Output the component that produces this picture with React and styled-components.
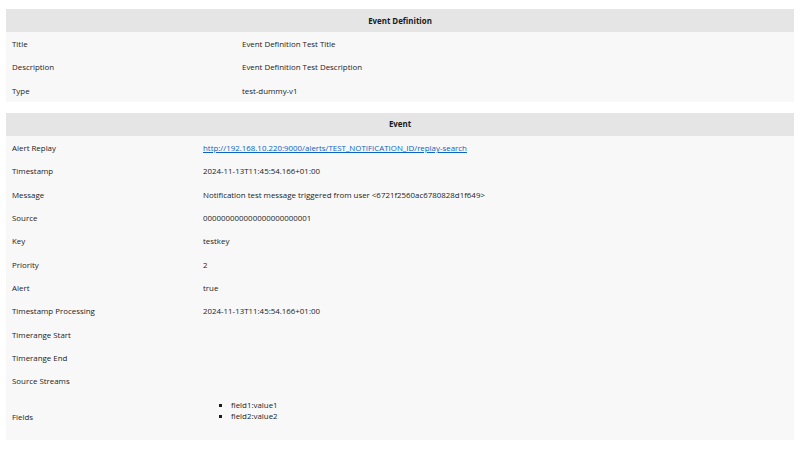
import React from "react";
import styled, { createGlobalStyle } from "styled-components";

const Global = createGlobalStyle`
  html, body { margin: 0; padding: 0; background: #ffffff; }
  body { font-family: "Open Sans", "Liberation Sans", Arial, sans-serif; }
`;

const Page = styled.div`
  padding: 9px 6px 0 6px;
  display: flex;
  flex-direction: column;
  gap: 11px;
`;

const Table = styled.table`
  width: 100%;
  table-layout: fixed;
  border-collapse: collapse;
  border-spacing: 0;
  background: #f8f8f8;
  font-size: 7.9px;
  color: #1c1c1c;
`;

const HeaderCell = styled.th`
  background: #e5e5e5;
  height: 23px;
  padding: 0 6px;
  font-weight: bold;
  text-align: center;
  vertical-align: middle;
  color: #1a1a1a;
`;

const Row = styled.tr`
  height: 23.33px;
`;

const LabelCell = styled.td`
  padding: 1px 6px 0 6px;
  vertical-align: middle;
  text-align: left;
`;

const ValueCell = styled.td`
  padding: 1px 6px 0 6px;
  vertical-align: middle;
  text-align: left;
`;

const Link = styled.a`
  color: #0b63c5;
  text-decoration: underline;
`;

const List = styled.ul`
  margin: 6px 0 18px 0;
  padding-left: 28px;
  list-style: square;
  line-height: 11px;
`;

const Section = ({ title, labelWidth, rows }) => (
  <Table>
    <colgroup>
      <col style={{ width: labelWidth }} />
      <col />
    </colgroup>
    <thead>
      <tr>
        <HeaderCell colSpan={2}>{title}</HeaderCell>
      </tr>
    </thead>
    <tbody>
      {rows.map(([label, value], i) => (
        <Row key={i}>
          <LabelCell>{label}</LabelCell>
          <ValueCell>{value}</ValueCell>
        </Row>
      ))}
    </tbody>
  </Table>
);

export default function App() {
  const defRows = [
    ["Title", "Event Definition Test Title"],
    ["Description", "Event Definition Test Description"],
    ["Type", "test-dummy-v1"],
  ];
  const url = "http://192.168.10.220:9000/alerts/TEST_NOTIFICATION_ID/replay-search";
  const eventRows = [
    ["Alert Replay", <Link href={url}>{url}</Link>],
    ["Timestamp", "2024-11-13T11:45:54.166+01:00"],
    ["Message", "Notification test message triggered from user <6721f2560ac6780828d1f649>"],
    ["Source", "000000000000000000000001"],
    ["Key", "testkey"],
    ["Priority", "2"],
    ["Alert", "true"],
    ["Timestamp Processing", "2024-11-13T11:45:54.166+01:00"],
    ["Timerange Start", ""],
    ["Timerange End", ""],
    ["Source Streams", ""],
    [
      "Fields",
      <List>
        <li>field1:value1</li>
        <li>field2:value2</li>
      </List>,
    ],
  ];
  return (
    <>
      <Global />
      <Page>
        <Section title="Event Definition" labelWidth={230} rows={defRows} />
        <Section title="Event" labelWidth={191} rows={eventRows} />
      </Page>
    </>
  );
}
